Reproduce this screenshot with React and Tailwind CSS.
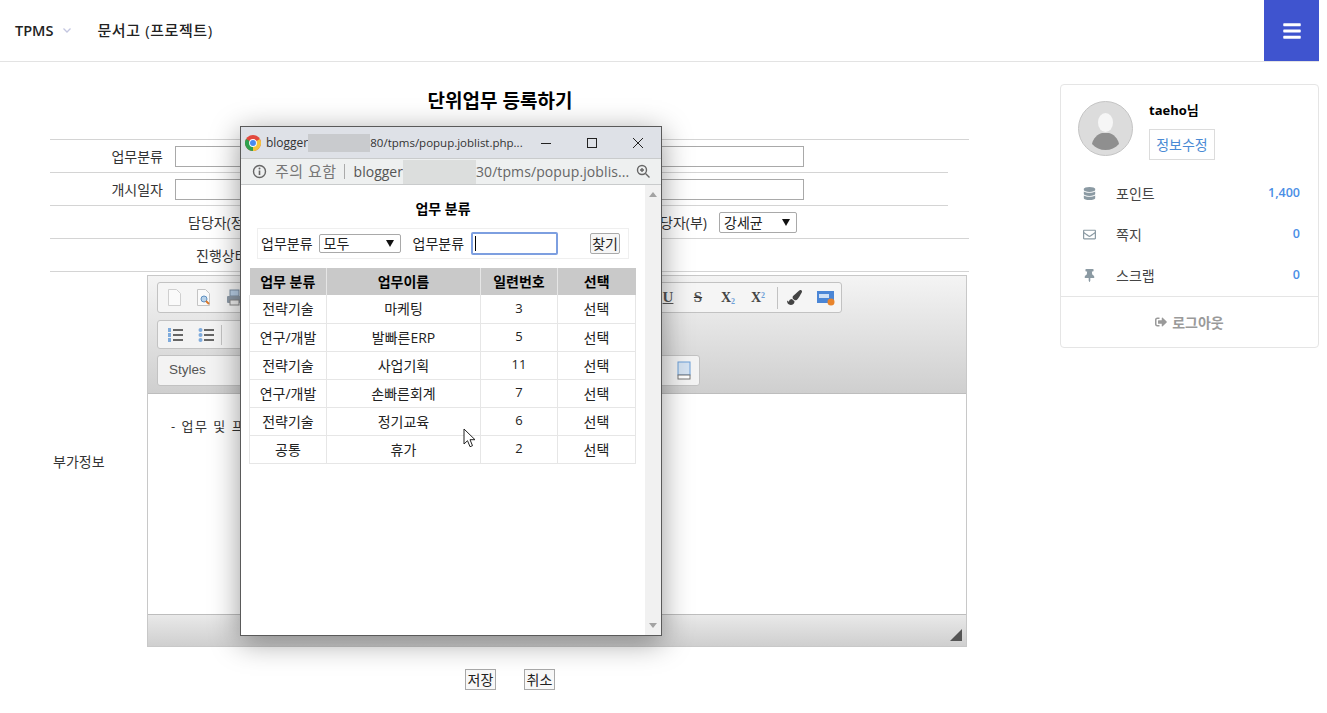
import React from "react";
import { FaBars, FaDatabase, FaRegEnvelope, FaThumbtack, FaSignOutAlt, FaPaintBrush } from "react-icons/fa";

const rows = [
  ["전략기술", "마케팅", "3"],
  ["연구/개발", "발빠른ERP", "5"],
  ["전략기술", "사업기획", "11"],
  ["연구/개발", "손빠른회계", "7"],
  ["전략기술", "정기교육", "6"],
  ["공통", "휴가", "2"],
];

function NativeSelect({ label, className }) {
  return (
    <div className={`flex items-center justify-between bg-white border border-[#a9a9a9] rounded-[2px] pl-1 pr-[6px] text-[14px] text-[#222] ${className}`}>
      <span>{label}</span>
      <svg width="8" height="7" viewBox="0 0 8 7"><path d="M0 0h8L4 7z" fill="#111" /></svg>
    </div>
  );
}

function SideRow({ icon, label, value }) {
  return (
    <div className="flex items-center h-[41px]">
      <span className="w-[22px] flex justify-center text-[#8b9aa3] text-[13px]">{icon}</span>
      <span className="ml-[16px] text-[14px] text-[#444]">{label}</span>
      <span className="ml-auto text-[12.5px] font-semibold text-[#4a8ee6]">{value}</span>
    </div>
  );
}

function PageIcon({ children, narrow }) {
  return <span className={`${narrow ? "w-[30px]" : "w-[31px]"} h-[22px] flex items-center justify-center`}>{children}</span>;
}

function ListIcon({ dotted }) {
  return (
    <svg width="16" height="16" viewBox="0 0 16 16">
      {[3, 8, 13].map((y) => (
        <g key={y}>
          {dotted ? <circle cx="2.500" cy={y} r="2" fill="#7fabdc" /> : <rect x="1" y={y - 2} width="3" height="4" fill="#7fabdc" />}
          <rect x="6" y={y - 1} width="10" height="2" fill="#666" />
        </g>
      ))}
    </svg>
  );
}

function ChromeLogo() {
  return (
    <svg width="16" height="16" viewBox="0 0 16 16">
      <circle cx="8" cy="8" r="8" fill="#e2483d" />
      <path d="M8 8 L1.070 4 A8 8 0 0 0 8 16 Z" fill="#2fa14f" />
      <path d="M8 8 L8 16 A8 8 0 0 0 14.930 4 Z" fill="#f6c53a" />
      <circle cx="8" cy="8" r="3.900" fill="#fff" />
      <circle cx="8" cy="8" r="3" fill="#4a8bf0" />
    </svg>
  );
}

function Popup() {
  return (
    <div className="absolute left-[240px] top-[126px] w-[422px] h-[510px] flex flex-col bg-white border border-[#5a5a5a] shadow-[0_6px_28px_rgba(0,0,0,0.4)]">
      <div className="h-[31px] shrink-0 flex items-center bg-[#dee1e7] pl-[4px]">
        <ChromeLogo />
        <span className="ml-[5px] text-[12px] text-[#333]">blogger</span>
        <span className="w-[62px] h-[18px] bg-[#c9cbce]" />
        <span className="text-[11.5px] text-[#333]">80/tpms/popup.joblist.php...</span>
        <svg className="ml-auto mr-[34px]" width="12" height="12" viewBox="0 0 12 12">
          <path d="M1 6.500h10" stroke="#222" strokeWidth="1" />
        </svg>
        <svg className="mr-[34px]" width="12" height="12" viewBox="0 0 12 12">
          <rect x="1.500" y="1.500" width="9" height="9" fill="none" stroke="#222" strokeWidth="1" />
        </svg>
        <svg className="mr-[17px]" width="12" height="12" viewBox="0 0 12 12">
          <path d="M1 1l10 10M11 1L1 11" stroke="#222" strokeWidth="1" />
        </svg>
      </div>
      <div className="h-[27px] shrink-0 flex items-center bg-[#eef0f0] border-y border-[#c9cbcc] pl-[11px]">
        <svg width="15" height="15" viewBox="0 0 15 15">
          <circle cx="7.500" cy="7.500" r="6" fill="none" stroke="#666" strokeWidth="1.400" />
          <path d="M7.500 6.500v4.500" stroke="#666" strokeWidth="1.600" />
          <circle cx="7.500" cy="4.400" r="1" fill="#666" />
        </svg>
        <span className="ml-[8px] text-[15px] text-[#777] tracking-[0.5px]">주의 요함</span>
        <span className="ml-[7px] w-px h-[15px] bg-[#aaa]" />
        <span className="ml-[9px] text-[14px] text-[#555]">blogger</span>
        <span className="w-[73px] h-[24px] bg-[#dcdedd]" />
        <span className="text-[14px] tracking-[0.1px] text-[#666]">30/tpms/popup.joblis...</span>
        <svg className="ml-auto mr-[10px]" width="15" height="15" viewBox="0 0 15 15">
          <circle cx="6" cy="6" r="4.500" fill="none" stroke="#666" strokeWidth="1.400" />
          <path d="M9.500 9.500l4 4M4 6h4M6 4v4" stroke="#666" strokeWidth="1.400" />
        </svg>
      </div>
      <div className="flex-1 flex min-h-0">
        <div className="w-[404px] flex flex-col pl-[8px]">
          <h2 className="mt-[15px] mr-[8px] text-center text-[14px] font-bold text-black leading-[18px]">업무 분류</h2>
          <div className="mt-[10px] ml-[8px] w-[372px] h-[31px] flex items-center border border-[#efefef] text-[14px] text-[#222]">
            <span className="ml-[3px]">업무분류</span>
            <NativeSelect label="모두" className="ml-[6px] w-[82px] h-[19px]" />
            <span className="ml-[12px]">업무분류</span>
            <div className="ml-[7px] w-[87px] h-[23px] flex items-center pl-[2px] bg-white border-2 border-[#7d9fe0] rounded-[2px]">
              <span className="w-px h-[15px] bg-black" />
            </div>
            <button type="button" className="ml-[32px] w-[30px] h-[21px] border border-[#aaa] rounded-[2px] bg-[#f6f6f6] text-[14px] leading-none">찾기</button>
          </div>
          <table className="mt-[9px] w-[386px] table-fixed border-collapse text-[14px] text-[#222]">
            <thead>
              <tr className="h-[27px] bg-[#c9c9c9] text-black font-bold">
                <th className="w-[77px] border-r border-[#e6e6e6]">업무 분류</th>
                <th className="w-[154px] border-r border-[#e6e6e6]">업무이름</th>
                <th className="w-[77px] border-r border-[#e6e6e6]">일련번호</th>
                <th className="w-[78px]">선택</th>
              </tr>
            </thead>
            <tbody>
              {rows.map((row, i) => (
                <tr key={i} className="h-[28px] text-center border-b border-[#e6e6e6]">
                  <td className="border-x border-[#e6e6e6]">{row[0]}</td>
                  <td className="border-r border-[#e6e6e6]">{row[1]}</td>
                  <td className="border-r border-[#e6e6e6] text-[13px]">{row[2]}</td>
                  <td className="border-r border-[#e6e6e6]">선택</td>
                </tr>
              ))}
            </tbody>
          </table>
        </div>
        <div className="w-[16px] bg-[#f1f1f1] flex flex-col items-center justify-between py-[7px] text-[#a3a3a3]">
          <svg width="8" height="5" viewBox="0 0 8 5"><path d="M0 5L4 0l4 5z" fill="currentColor" /></svg>
          <svg width="8" height="5" viewBox="0 0 8 5"><path d="M0 0l4 5 4-5z" fill="currentColor" /></svg>
        </div>
      </div>
    </div>
  );
}

function Editor() {
  return (
    <div className="w-[820px] h-[372px] flex flex-col border border-[#c8c8c8]">
      <div className="h-[118px] shrink-0 px-[9px] pt-[6px] bg-gradient-to-b from-[#f4f4f4] to-[#cfcfcf] border-b border-[#bdbdbd] flex flex-col">
        <div className="w-[685px] h-[31px] flex items-center justify-between bg-[#f5f5f5] border border-[#c2c2c2] rounded-[3px] pl-[1px]">
          <div className="flex items-center">
            <PageIcon narrow>
              <svg width="15" height="17" viewBox="0 0 15 17"><path d="M1.500.5h8l4 4v12h-12z" fill="#fafafa" stroke="#cfcfcf" /></svg>
            </PageIcon>
            <PageIcon narrow>
              <svg width="16" height="17" viewBox="0 0 16 17"><path d="M1.500.5h8l4 4v12h-12z" fill="#fafafa" stroke="#c4c4c4" /><circle cx="8" cy="10" r="3" fill="#b9d3ea" stroke="#5e8fc0" /><path d="M10 12l3 3" stroke="#d9782b" strokeWidth="2" /></svg>
            </PageIcon>
            <PageIcon narrow>
              <svg width="17" height="17" viewBox="0 0 17 17"><rect x="4" y="1" width="9" height="6" fill="#b9cfe6" stroke="#7d8fa3" /><rect x="1" y="7" width="15" height="7" rx="1" fill="#8d99a6" /><rect x="4" y="11" width="9" height="5" fill="#eee" stroke="#888" /></svg>
            </PageIcon>
          </div>
          <div className="flex items-center">
            <PageIcon narrow><span className="font-['Liberation_Serif',serif] font-bold text-[15px] text-[#555] underline">U</span></PageIcon>
            <PageIcon narrow><span className="font-['Liberation_Serif',serif] font-bold text-[15px] text-[#555] line-through decoration-[#333]">S</span></PageIcon>
            <PageIcon narrow><span className="font-['Liberation_Serif',serif] font-bold text-[14px] text-[#444]">X<sub className="text-[8px] text-[#6d9fd8]">2</sub></span></PageIcon>
            <PageIcon narrow><span className="font-['Liberation_Serif',serif] font-bold text-[14px] text-[#444]">X<sup className="text-[8px] text-[#6d9fd8]">2</sup></span></PageIcon>
            <span className="w-px h-[22px] bg-[#c2c2c2] ml-[4px] mr-[1px]" />
            <PageIcon><FaPaintBrush className="text-[#444] text-[15px]" /></PageIcon>
            <PageIcon>
              <svg width="18" height="16" viewBox="0 0 18 16"><rect x="0" y="1" width="17" height="12" fill="#4b86d6" /><rect x="2" y="4" width="10" height="4" fill="#cfe0f5" /><circle cx="14" cy="12" r="3.500" fill="#e8842c" /></svg>
            </PageIcon>
          </div>
        </div>
        <div className="mt-[7px] w-[120px] h-[29px] flex items-center bg-[#f3f3f3] border border-[#c2c2c2] rounded-[3px] px-[1px]">
          <PageIcon><ListIcon /></PageIcon>
          <PageIcon><ListIcon dotted /></PageIcon>
          <span className="w-px h-[20px] bg-[#c2c2c2]" />
        </div>
        <div className="mt-[6px] w-[543px] h-[31px] flex items-center justify-between bg-[#f3f3f3] border border-[#c2c2c2] rounded-[3px] pl-[11px] pr-[7px]">
          <span className="text-[13.500px] text-[#555] font-['Liberation_Sans',sans-serif]">Styles</span>
          <svg width="16" height="19" viewBox="0 0 16 19"><rect x="2" y="1" width="12" height="13" fill="#d5e3f2" stroke="#6d9fd8" /><rect x="2" y="14" width="12" height="4" fill="#fff" stroke="#777" /></svg>
        </div>
      </div>
      <div className="flex-1 bg-white pl-[23px] pt-[23px] text-[13px] text-[#333] tracking-[1.5px]">- 업무 및 프</div>
      <div className="h-[32px] shrink-0 flex items-end justify-end pr-[4px] pb-[5px] bg-gradient-to-b from-[#e9e9e9] to-[#cfcfcf] border-t border-[#bdbdbd]">
        <svg width="12" height="12" viewBox="0 0 12 12"><path d="M12 0v12H0z" fill="#555" /></svg>
      </div>
    </div>
  );
}

function FormRow({ wide, children }) {
  return (
    <div className={`h-[33px] flex items-center text-[14px] text-[#333] ${wide ? "w-[919px]" : "w-[898px]"} border-b border-[#d4d4d4]`}>
      {children}
    </div>
  );
}

export default function App() {
  return (
    <div className="relative w-[1327px] h-[713px] overflow-hidden bg-white font-['Open_Sans','Noto_Sans_CJK_KR',sans-serif]">
      <header className="w-[1319px] h-[62px] flex border-b border-[#e3e3e3]">
        <div className="flex items-center pl-[15px]">
          <span className="text-[14.500px] font-semibold text-[#222]">TPMS</span>
          <svg className="ml-[10px]" width="8" height="5" viewBox="0 0 8 5"><path d="M.5.5L4 4 7.500.5" fill="none" stroke="#c3c6e0" strokeWidth="1.300" /></svg>
          <span className="ml-[26px] text-[15px] tracking-[0.6px] font-medium text-[#222]">문서고 (프로젝트)</span>
        </div>
        <button type="button" className="ml-auto w-[55px] h-[61px] bg-[#3f54cf] flex items-center justify-center text-white text-[20px]">
          <FaBars />
        </button>
      </header>

      <div className="flex">
        <main className="w-[1060px] shrink-0">
          <h1 className="w-[1000px] mt-[27px] text-center text-[19px] leading-[24px] font-bold text-black">단위업무 등록하기</h1>
          <div className="ml-[50px] w-[919px] flex flex-col">
            <div className="h-[27px] border-b border-[#d4d4d4]" />
            <FormRow>
              <span className="w-[113px] text-right">업무분류</span>
              <div className="ml-[12px] w-[629px] h-[21px] border border-[#a9a9a9]" />
            </FormRow>
            <FormRow>
              <span className="w-[113px] text-right">개시일자</span>
              <div className="ml-[12px] w-[629px] h-[21px] border border-[#a9a9a9]" />
            </FormRow>
            <FormRow wide>
              <span className="ml-[138px]">담당자(정)</span>
              <span className="ml-auto">담당자(부)</span>
              <NativeSelect label="강세균" className="ml-[12px] mr-[172px] w-[78px] h-[21px]" />
            </FormRow>
            <FormRow wide>
              <span className="ml-[146px]">진행상태</span>
            </FormRow>
            <div className="mt-[3px] flex items-center">
              <span className="w-[97px] pl-[3px] text-[14px] text-[#333]">부가정보</span>
              <Editor />
            </div>
            <div className="mt-[22px] ml-[415px] flex gap-[28px]">
              <button type="button" className="w-[31px] h-[21px] border border-[#a9a9a9] bg-[#f8f8f8] text-[14px] leading-none text-[#222]">저장</button>
              <button type="button" className="w-[31px] h-[21px] border border-[#a9a9a9] bg-[#f8f8f8] text-[14px] leading-none text-[#222]">취소</button>
            </div>
          </div>
        </main>

        <aside className="w-[259px] h-[264px] mt-[22px] border border-[#e5e5e5] rounded-[4px] flex flex-col">
          <div className="flex pl-[17px] pt-[16px]">
            <svg width="55" height="55" viewBox="0 0 55 55">
              <circle cx="27.500" cy="27.500" r="27" fill="#dcdcdc" stroke="#c4c4c4" />
              <ellipse cx="27.500" cy="21.500" rx="7.500" ry="9.500" fill="#f6f6f6" />
              <path d="M14 43c1-6 6-10 10-11h7c4 1 9 5 10 11-4 4-8 6-13.500 6S18 47 14 43z" fill="#8f8f8f" />
            </svg>
            <div className="ml-[16px]">
              <div className="h-[18px] text-[13px] leading-[18px] font-bold text-black">taeho님</div>
              <button type="button" className="mt-[10px] w-[66px] h-[31px] border border-[#dcdcdc] text-[14px] text-[#4a8ad4]">정보수정</button>
            </div>
          </div>
          <div className="mt-[13px] pl-[17px] pr-[18px]">
            <SideRow icon={<FaDatabase />} label="포인트" value="1,400" />
            <SideRow icon={<FaRegEnvelope />} label="쪽지" value="0" />
            <SideRow icon={<FaThumbtack />} label="스크랩" value="0" />
          </div>
          <div className="flex-1 flex items-center justify-center gap-[5px] border-t border-[#e5e5e5] text-[14px] font-semibold text-[#9a9a9a]">
            <FaSignOutAlt className="text-[12px]" />
            <span>로그아웃</span>
          </div>
        </aside>
      </div>

      <Popup />

      <svg className="absolute left-[463px] top-[428px]" width="13" height="20" viewBox="0 0 13 20">
        <path d="M1 1v15l3.500-3.300 2.500 6 2.500-1-2.500-6H12z" fill="#fff" stroke="#222" strokeWidth="1" />
      </svg>
    </div>
  );
}
